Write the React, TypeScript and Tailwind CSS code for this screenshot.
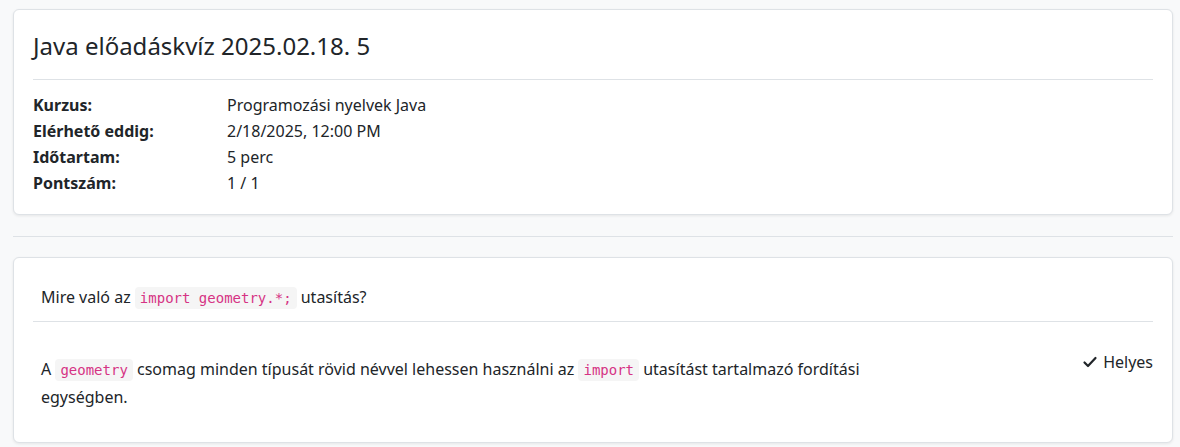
import React from "react";

const Code = ({ children }: { children: React.ReactNode }) => (
  <code className="rounded bg-[#f5f5f5] px-[5px] py-[3px] text-[14px] text-[#d63384] [font-family:'DejaVu_Sans_Mono',monospace]">
    {children}
  </code>
);

export default function App() {
  const rows: [string, string][] = [
    ["Kurzus:", "Programozási nyelvek Java"],
    ["Elérhető eddig:", "2/18/2025, 12:00 PM"],
    ["Időtartam:", "5 perc"],
    ["Pontszám:", "1 / 1"],
  ];
  return (
    <div className="min-h-[447px] bg-[#f8f9fa] pl-[13px] pr-[7px] pt-[9px] text-[16px] text-[#212529] [font-family:'Noto_Sans',sans-serif]">
      <div className="rounded-md border border-[#dee2e6] bg-white px-[19px] pb-[18px] pt-[22px] shadow-[0_1px_3px_rgba(0,0,0,0.08)]">
        <h1 className="pb-[19px] text-[24px] leading-[28px]">Java előadáskvíz 2025.02.18. 5</h1>
        <div className="border-t border-[#dee2e6] pt-[12px]">
          {rows.map(([k, v]) => (
            <div key={k} className="flex leading-[26px]">
              <div className="w-[194px] font-bold">{k}</div>
              <div>{v}</div>
            </div>
          ))}
        </div>
      </div>
      <div className="mb-[20px] mt-[21px] border-t border-[#dee2e6]" />
      <div className="rounded-md border border-[#dee2e6] bg-white px-[19px] pb-[31px] pt-[27px] shadow-[0_1px_3px_rgba(0,0,0,0.08)]">
        <div className="border-b border-[#dee2e6] px-2 pb-[11px] leading-[24px]">
          Mire való az <Code>import geometry.*;</Code> utasítás?
        </div>
        <div className="flex justify-between pl-2 pt-[34px]">
          <div className="w-[870px] leading-[27px]">
            A <Code>geometry</Code> csomag minden típusát rövid névvel lehessen használni az{" "}
            <Code>import</Code> utasítást tartalmazó fordítási egységben.
          </div>
          <div className="-mt-[6px] flex h-[24px] items-center gap-[5px]">
            <svg width="16" height="16" viewBox="0 0 16 16" fill="none" stroke="#212529" strokeWidth="2.2" strokeLinecap="round" strokeLinejoin="round">
              <path d="M2.5 8.5l3.5 3.5 7.5-8" />
            </svg>
            <span>Helyes</span>
          </div>
        </div>
      </div>
    </div>
  );
}
